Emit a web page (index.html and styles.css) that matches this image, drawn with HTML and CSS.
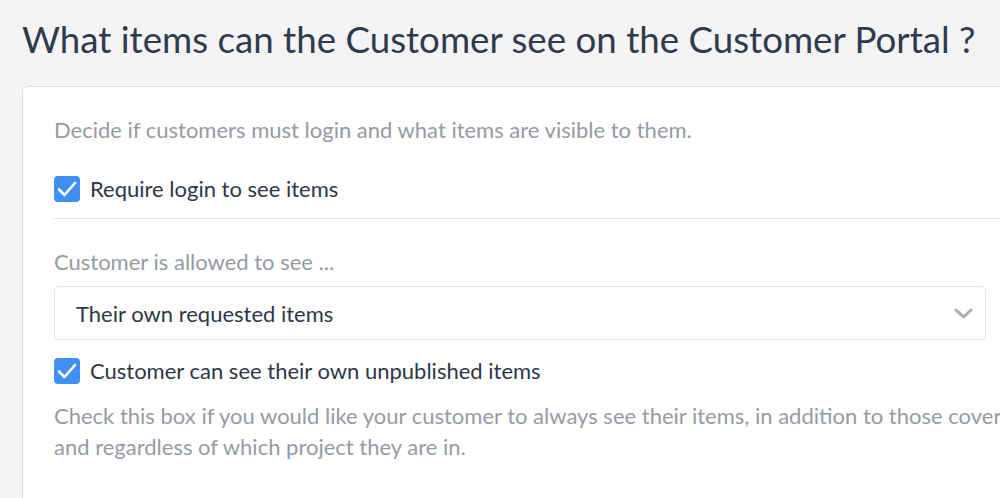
FILE: index.html
```html
<html>
	<head>
		<title>Customer Portal - Visibility</title>
		<link rel="stylesheet" href="styles.css">
	</head>
	<body>

	<h1 class="page-title">What items can the Customer see on the Customer Portal ?</h1>

	<div class="card">
		<p class="hint">Decide if customers must login and what items are visible to them.</p>

		<label class="check-row">
			<span class="checkbox">
				<svg width="26" height="26" viewBox="0 0 26 26"><polyline points="5,13.5 10.5,19 21,7" fill="none" stroke="#fff" stroke-width="2.6" stroke-linecap="round" stroke-linejoin="round"/></svg>
			</span>
			Require login to see items
		</label>

		<hr class="divider">

		<p class="field-label">Customer is allowed to see ...</p>
		<div class="select">
			<span>Their own requested items</span>
			<svg class="chevron" width="19" height="11" viewBox="0 0 19 11"><polyline points="2,2 9.5,9 17,2" fill="none" stroke="#a5adb9" stroke-width="3" stroke-linecap="round" stroke-linejoin="round"/></svg>
		</div>

		<label class="check-row">
			<span class="checkbox">
				<svg width="26" height="26" viewBox="0 0 26 26"><polyline points="5,13.5 10.5,19 21,7" fill="none" stroke="#fff" stroke-width="2.6" stroke-linecap="round" stroke-linejoin="round"/></svg>
			</span>
			Customer can see their own unpublished items
		</label>

		<p class="help">Check this box if you would like your customer to always see their items, in addition to those covered by the selection above,<br>and regardless of which project they are in.</p>
	</div>

	</body>
</html>
```

FILE: styles.css
```css
body {
	background-color: #f4f4f4;
	font: normal 22px Lato, "Open Sans", sans-serif;
	line-height: 31px;
	color: #2d3748;
	margin: 0;
	overflow: hidden;
}
.page-title {
	font-size: 36.7px;
	font-weight: normal;
	line-height: 44px;
	color: #2f3b4e;
	margin: 17px 0 0 22px;
	white-space: nowrap;
}
.card {
	background-color: #fff;
	border: 1px solid #dedfe2;
	border-radius: 6px;
	box-sizing: border-box;
	margin: 25px 0 0 22px;
	padding: 27px 0 40px 31px;
	width: 1200px;
}
.card p { margin: 0; }
.hint {
	color: #959ba5;
	margin-bottom: 28px !important;
}
.check-row {
	display: flex;
	align-items: center;
	gap: 10px;
}
.checkbox {
	display: block;
	width: 26px;
	height: 26px;
	background-color: #3f90f1;
	border-radius: 4px;
}
.checkbox svg { display: block; }
.divider {
	border: none;
	border-top: 1px solid #e4e5e8;
	margin: 14px 0 27px 0;
	width: 1000px;
}
.field-label {
	color: #959ba5;
	margin-bottom: 9px !important;
}
.select {
	display: flex;
	align-items: center;
	justify-content: space-between;
	box-sizing: border-box;
	width: 932px;
	height: 54px;
	border: 1px solid #e1e3e7;
	border-radius: 5px;
	padding: 0 12px 0 21px;
	margin-bottom: 15px;
}
.chevron { display: block; }
.help {
	color: #959ba5;
	margin-top: 14px !important;
	white-space: nowrap;
}
```
